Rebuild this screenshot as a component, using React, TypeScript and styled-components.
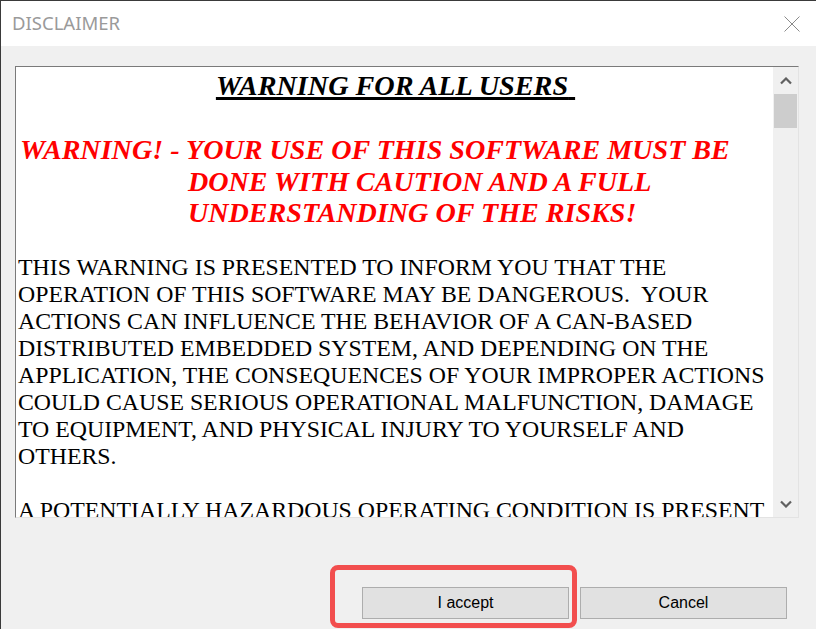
import React from 'react';
import styled, { createGlobalStyle } from 'styled-components';

const GlobalStyle = createGlobalStyle`
  html, body {
    margin: 0;
    padding: 0;
    background: #f0f0f0;
    overflow: hidden;
  }
  * {
    box-sizing: border-box;
  }
`;

const bodyLines: string[] = [
  'THIS WARNING IS PRESENTED TO INFORM YOU THAT THE',
  'OPERATION OF THIS SOFTWARE MAY BE DANGEROUS.\u00a0 YOUR',
  'ACTIONS CAN INFLUENCE THE BEHAVIOR OF A CAN-BASED',
  'DISTRIBUTED EMBEDDED SYSTEM, AND DEPENDING ON THE',
  'APPLICATION, THE CONSEQUENCES OF YOUR IMPROPER ACTIONS',
  'COULD CAUSE SERIOUS OPERATIONAL MALFUNCTION, DAMAGE',
  'TO EQUIPMENT, AND PHYSICAL INJURY TO YOURSELF AND',
  'OTHERS.',
];

const redLines: string[] = [
  'WARNING! - YOUR USE OF THIS SOFTWARE MUST BE',
  'DONE WITH CAUTION AND A FULL',
  'UNDERSTANDING OF THE RISKS!',
];

const Chevron: React.FC<{ down?: boolean }> = ({ down }) => (
  <svg width="12" height="8" viewBox="0 0 12 8">
    <polyline
      points={down ? '1,1.5 6,6.5 11,1.5' : '1,6.5 6,1.5 11,6.5'}
      fill="none"
      stroke="#606060"
      strokeWidth="2.2"
    />
  </svg>
);

const App: React.FC = () => {
  return (
    <>
      <GlobalStyle />
      <Window>
        <TitleBar>
          <Title>DISCLAIMER</Title>
          <CloseButton>
            <svg width="16" height="16" viewBox="0 0 16 16">
              <path d="M0.5 0.5 L15.5 15.5 M15.5 0.5 L0.5 15.5" stroke="#8a8a8a" strokeWidth="1" fill="none" />
            </svg>
          </CloseButton>
        </TitleBar>

        <Body>
          <TextBox>
            <Content>
              <Heading>WARNING FOR ALL USERS{'\u00a0'}</Heading>
              <RedWarning>
                {redLines.map((line: string, i: number) => (
                  <React.Fragment key={i}>
                    {line}
                    {i < redLines.length - 1 && <br />}
                  </React.Fragment>
                ))}
              </RedWarning>
              <Paragraph>
                {bodyLines.map((line: string, i: number) => (
                  <React.Fragment key={i}>
                    {line}
                    {i < bodyLines.length - 1 && <br />}
                  </React.Fragment>
                ))}
              </Paragraph>
              <Paragraph>
                A POTENTIALLY HAZARDOUS OPERATING CONDITION IS PRESENT
              </Paragraph>
            </Content>
            <ScrollBar>
              <ArrowButton>
                <Chevron />
              </ArrowButton>
              <Track>
                <Thumb />
              </Track>
              <ArrowButton>
                <Chevron down />
              </ArrowButton>
            </ScrollBar>
          </TextBox>

          <Footer>
            <Highlight>
              <Button>I accept</Button>
            </Highlight>
            <Button>Cancel</Button>
          </Footer>
        </Body>
      </Window>
    </>
  );
};

export default App;

const Window = styled.div`
  width: 816px;
  height: 629px;
  display: flex;
  flex-direction: column;
  background: #f0f0f0;
  border-top: 1px solid #3a3a3a;
  border-left: 1px solid #3a3a3a;
  overflow: hidden;
`;

const TitleBar = styled.div`
  height: 45px;
  flex-shrink: 0;
  display: flex;
  align-items: center;
  justify-content: space-between;
  background: #ffffff;
  padding: 0 16px 0 11px;
`;

const Title = styled.div`
  font-family: 'Noto Sans', 'Open Sans', sans-serif;
  font-size: 18.5px;
  color: #9a9a9a;
  margin-top: -2px;
`;

const CloseButton = styled.div`
  width: 16px;
  height: 16px;
  display: flex;
`;

const Body = styled.div`
  flex: 1;
  display: flex;
  flex-direction: column;
  padding: 20px 0 0 14px;
`;

const TextBox = styled.div`
  width: 784px;
  height: 452px;
  display: flex;
  background: #ffffff;
  border-top: 1px solid #7a7a7a;
  border-left: 1px solid #7a7a7a;
  border-right: 1px solid #e3e3e3;
  border-bottom: 1px solid #e3e3e3;
`;

const Content = styled.div`
  flex: 1;
  overflow: hidden;
  padding: 3px 0 0 2px;
  font-family: 'Liberation Serif', 'Times New Roman', serif;
  color: #000000;
  white-space: nowrap;
`;

const Heading = styled.div`
  text-align: center;
  font-size: 28.2px;
  line-height: 31px;
  font-weight: bold;
  font-style: italic;
  text-decoration: underline;
  text-decoration-thickness: 3px;
  text-underline-offset: 2px;
`;

const RedWarning = styled.div`
  margin-top: 33px;
  padding-left: 170px;
  text-indent: -168px;
  font-size: 28.1px;
  line-height: 31.5px;
  font-weight: bold;
  font-style: italic;
  color: #ff0000;
`;

const Paragraph = styled.div`
  margin-top: 25px;
  font-size: 23.8px;
  line-height: 27px;

  & + & {
    margin-top: 27px;
  }
`;

const ScrollBar = styled.div`
  width: 25px;
  flex-shrink: 0;
  display: flex;
  flex-direction: column;
  background: #f0f0f0;
`;

const ArrowButton = styled.div`
  height: 27px;
  display: flex;
  align-items: center;
  justify-content: center;
`;

const Track = styled.div`
  flex: 1;
  display: flex;
  flex-direction: column;
  padding: 0 1px;
`;

const Thumb = styled.div`
  height: 34px;
  background: #cdcdcd;
`;

const Footer = styled.div`
  display: flex;
  justify-content: flex-end;
  gap: 11px;
  padding: 69px 29px 0 0;
`;

const Highlight = styled.div`
  position: relative;

  &::after {
    content: '';
    position: absolute;
    left: -32px;
    top: -22px;
    right: -8px;
    bottom: -9px;
    border: 5px solid #f24e4e;
    border-radius: 8px;
    pointer-events: none;
  }
`;

const Button = styled.button`
  width: 207px;
  height: 32px;
  padding: 0;
  display: block;
  background: #e1e1e1;
  border: 1px solid #adadad;
  border-radius: 0;
  font-family: 'Liberation Sans', Arial, sans-serif;
  font-size: 16px;
  color: #000000;
`;
